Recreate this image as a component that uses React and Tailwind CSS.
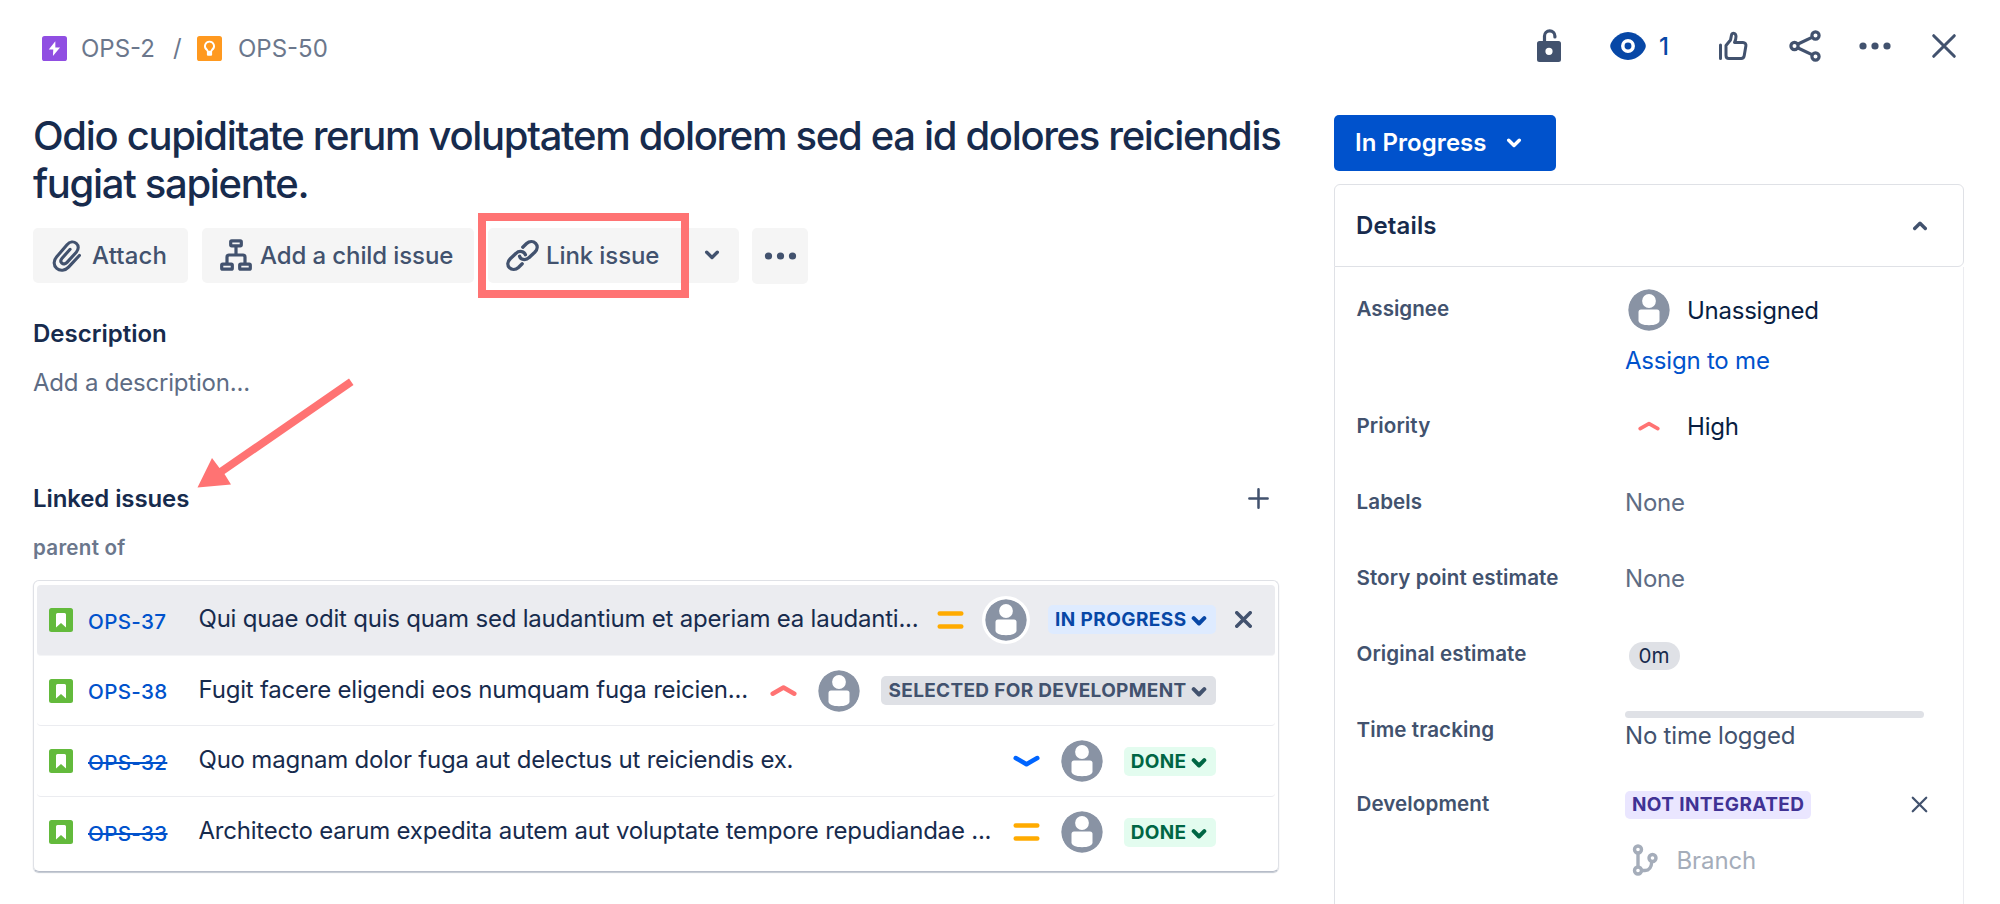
import React from 'react';

const linkedIssues = [
  { key: 'OPS-37', summary: 'Qui quae odit quis quam sed laudantium et aperiam ea laudanti...', priority: 'medium', status: 'IN PROGRESS', active: true, statusClass: 'bg-[#deebff] text-[#0747a6] tracking-[0.42px]' },
  { key: 'OPS-38', summary: 'Fugit facere eligendi eos numquam fuga reicien...', priority: 'high', status: 'SELECTED FOR DEVELOPMENT', statusClass: 'bg-[#dfe1e6] text-[#42526e] tracking-[0.33px]' },
  { key: 'OPS-32', summary: 'Quo magnam dolor fuga aut delectus ut reiciendis ex.', priority: 'low', status: 'DONE', done: true, statusClass: 'bg-[#e3fcef] text-[#006644] tracking-[0.33px]' },
  { key: 'OPS-33', summary: 'Architecto earum expedita autem aut voluptate tempore repudiandae ...', priority: 'medium', status: 'DONE', done: true, statusClass: 'bg-[#e3fcef] text-[#006644] tracking-[0.33px]' },
];

const Chevron = ({ up, className, strokeWidth = 3.4 }) => (
  <svg viewBox="0 0 16 10" className={className} fill="none" stroke="currentColor" strokeWidth={strokeWidth} strokeLinecap="round" strokeLinejoin="round">
    <path d={up ? 'M2.7 7.5 8 2.2l5.3 5.3' : 'M2.7 2.2 8 7.5l5.3-5.3'} />
  </svg>
);

const Cross = ({ className, strokeWidth = 2.8 }) => (
  <svg viewBox="0 0 24 24" className={className} fill="none" stroke="currentColor" strokeWidth={strokeWidth} strokeLinecap="round">
    <path d="M2.5 2.5l19 19M21.5 2.5l-19 19" />
  </svg>
);

const Dots = ({ className }) => (
  <svg viewBox="0 0 32 8" className={className} fill="currentColor">
    <circle cx="4" cy="4" r="3.6" />
    <circle cx="16" cy="4" r="3.6" />
    <circle cx="28" cy="4" r="3.6" />
  </svg>
);

const Avatar = ({ ring }) => (
  <svg viewBox="0 0 42 42" className={`w-[42px] h-[42px] shrink-0 rounded-full ${ring ? 'ring-3 ring-white bg-white' : ''}`}>
    <circle cx="21" cy="21" r="20.7" fill="#8993a4" />
    <circle cx="21" cy="12" r="6.9" fill="#fff" />
    <path d="M13 20.5h16a2.5 2.5 0 0 1 2.5 2.5v8.5c0 3-4.5 4.7-10.5 4.7s-10.5-1.7-10.5-4.7V23a2.5 2.5 0 0 1 2.5-2.5z" fill="#fff" />
  </svg>
);

const Priority = ({ level, className = 'w-[27px] h-[20px]' }) => {
  if (level === 'medium') {
    return (
      <svg viewBox="0 0 27 20" className={className} stroke="#ffab00" strokeWidth="4.5" strokeLinecap="round">
        <path d="M2.7 3.5h21.6M2.7 16.5h21.6" />
      </svg>
    );
  }
  return (
    <svg viewBox="0 0 27 20" className={className} fill="none" stroke={level === 'high' ? '#ff7373' : '#0065ff'} strokeWidth="4.5" strokeLinecap="round" strokeLinejoin="round">
      <path d={level === 'high' ? 'M2.7 12.7 13.5 6.5l10.8 6.2' : 'M2.7 7 13.5 13.2 24.3 7'} />
    </svg>
  );
};

const StoryIcon = () => (
  <svg viewBox="0 0 24 24" className="w-[24px] h-[24px] shrink-0">
    <rect width="24" height="24" rx="2.5" fill="#63ba3c" />
    <path d="M7 6.5Q7 5 8.5 5h7Q17 5 17 6.5v13L12 15l-5 4.5z" fill="#fff" />
  </svg>
);

const Field = ({ label, children, className = 'h-[76px]' }) => (
  <div className={`flex items-center ${className}`}>
    <div className="w-[268.5px] shrink-0 text-[20.6px] font-semibold text-[#42526e] tracking-[0.08px]">{label}</div>
    {children}
  </div>
);

const App = () => {
  return (
    <div className="relative w-[2000px] h-[904px] overflow-hidden bg-white font-['Inter',sans-serif] text-[24px] leading-none text-[#172b4d] whitespace-nowrap">
      <header className="flex h-[112px] items-start justify-between">
        <div className="flex items-center pl-[42px] mt-[34px] h-[28px] text-[#6b778c]">
          <svg viewBox="0 0 24 24" className="w-[25px] h-[25px]">
            <rect width="24" height="24" rx="2.5" fill="#904ee2" />
            <path d="M12.8 5 6.5 13h4.3l-.3 6.3L17.3 11h-4.5z" fill="#fff" />
          </svg>
          <span className="ml-[14px] mt-px w-[75px]">OPS-2</span>
          <span className="ml-[17px] w-[9px]">/</span>
          <svg viewBox="0 0 24 24" className="w-[25px] h-[25px] ml-[15px]">
            <rect width="24" height="24" rx="2.5" fill="#ff991f" />
            <path d="M12 5.4a4.3 4.3 0 0 0-2.4 7.9l.9 1.7h3l.9-1.7A4.3 4.3 0 0 0 12 5.4z" fill="none" stroke="#fff" strokeWidth="1.8" />
            <rect x="9.5" y="14.3" width="5" height="4.7" rx="1" fill="#fff" />
          </svg>
          <span className="ml-[16px] mt-px">OPS-50</span>
        </div>

        <div className="flex items-center pr-[43px] mt-[28px] h-[36px] text-[#42526e]">
          <svg viewBox="0 0 26 36" className="w-[26px] h-[36px]">
            <path d="M8.5 15V8a5.2 5.2 0 0 1 10.4 0v1" fill="none" stroke="currentColor" strokeWidth="3.2" strokeLinecap="round" />
            <path fillRule="evenodd" d="M3.5 13h19a2.5 2.5 0 0 1 2.5 2.5v16a2.5 2.5 0 0 1-2.5 2.5h-19a2.5 2.5 0 0 1-2.5-2.5v-16a2.5 2.5 0 0 1 2.5-2.5zM13 19.7a3.6 3.6 0 1 0 0 7.2 3.6 3.6 0 0 0 0-7.2z" fill="currentColor" />
          </svg>
          <svg viewBox="0 0 36 28" className="w-[36px] h-[28px] ml-[48px]">
            <path d="M18 0C8 0 .2 9.5.2 14S8 28 18 28s17.8-9.5 17.8-14S28 0 18 0z" fill="#0747a6" />
            <circle cx="18" cy="14" r="5.2" fill="none" stroke="#fff" strokeWidth="3.5" />
          </svg>
          <span className="w-[14px] ml-[13px] mt-px text-[#0747a6] font-medium">1</span>
          <svg viewBox="0 0 30 30" className="w-[30px] h-[30px] ml-[45px]" fill="none" stroke="currentColor" strokeWidth="3" strokeLinecap="round" strokeLinejoin="round">
            <path d="M2.5 14v13.5M8 14.5 12.5 9l1-5c.5-2.8 4.5-2 4.5 1.500 0 2.500-.5 4-1.500 6H25c2 0 3.200 1.600 2.900 3.300l-1.700 10c-.3 1.800-1.500 2.700-3 2.700H11c-2 0-3-1-3-3z" />
          </svg>
          <svg viewBox="0 0 32 32" className="w-[32px] h-[32px] ml-[41px]" fill="none" stroke="currentColor" strokeWidth="3.2">
            <circle cx="5.5" cy="16" r="3.6" />
            <circle cx="26.5" cy="5.5" r="3.6" />
            <circle cx="26.5" cy="26.5" r="3.6" />
            <path d="m8.5 14.3 15-7.2M8.5 17.7l15 7.2" />
          </svg>
          <Dots className="w-[32px] h-[8px] ml-[38px]" />
          <Cross className="w-[26px] h-[26px] ml-[40px]" />
        </div>
      </header>

      <div className="flex h-[792px]">
        <main className="w-[1334px] shrink-0 pl-[33px]">
          <h1 className="text-[40px] leading-[48px] font-medium tracking-[-1.33px]">
            Odio cupiditate rerum voluptatem dolorem sed ea id dolores reiciendis
            <br />
            fugiat sapiente.
          </h1>

          <div className="flex mt-[19.5px] h-[56px] font-medium text-[#42526e]">
            <button className="flex items-center w-[155px] h-[55px] pl-[18px] rounded-[5px] bg-[#f5f5f5]">
              <svg viewBox="0 0 30 32" className="w-[31px] h-[33px]" fill="none" stroke="currentColor" strokeWidth="3" strokeLinecap="round" strokeLinejoin="round">
                <path d="M27.5 16 17 27.3c-3.3 3.5-8.3 4-11.5 1.2s-3.3-7.5-.2-11L15.5 5.5c2.7-3 6.5-3.4 9-1.2s2.5 5.7 0 8.5l-9 9.9c-1.5 1.7-3.7 1.9-5 .7s-1.2-3.2.2-4.8L18.5 10" />
              </svg>
              <span className="ml-[10px] mt-px tracking-[0.15px]">Attach</span>
            </button>
            <button className="flex items-center w-[272px] h-[55px] ml-[14px] pl-[18px] rounded-[5px] bg-[#f5f5f5]">
              <svg viewBox="0 0 32 32" className="w-[32px] h-[32px]" fill="none" stroke="currentColor" strokeWidth="3.2" strokeLinejoin="round">
                <rect x="10.7" y="1.8" width="10.6" height="5" rx="1" />
                <rect x="1.7" y="25.2" width="10.6" height="5" rx="1" />
                <rect x="19.7" y="25.2" width="10.6" height="5" rx="1" />
                <path d="M16 7v9M7 25v-7q0-2 2-2h14q2 0 2 2v7" />
              </svg>
              <span className="ml-[8px] mt-px tracking-[-0.1px]">Add a child issue</span>
            </button>
            <button className="flex items-center w-[200px] h-[55px] ml-[14px] pl-[17px] rounded-l-[5px] bg-[#f5f5f5]">
              <svg viewBox="0 0 24 24" className="w-[35px] h-[35px]" fill="none" stroke="currentColor" strokeWidth="2.3" strokeLinecap="round" strokeLinejoin="round">
                <path d="M10 12.5c.4 1.3 1.3 2 2.5 2.2 1.6.3 2.8-.1 3.9-1.2l4-3.7c2-2 2.1-4.5.6-6.1-1.6-1.6-4.3-1.6-6.2.1l-2.6 2.5" />
                <path d="M14 11.5c-.4-1.3-1.3-2-2.5-2.2-1.6-.3-2.8.1-3.9 1.2l-4 3.7c-2 2-2.1 4.5-.6 6.1 1.6 1.6 4.3 1.6 6.2-.1l2.6-2.5" />
              </svg>
              <span className="ml-[6px] mt-px tracking-[-0.1px]">Link issue</span>
            </button>
            <button className="flex items-center justify-center w-[51px] h-[55px] pr-[4px] rounded-r-[5px] bg-[#f5f5f5]">
              <Chevron className="w-[16px] h-[10px]" />
            </button>
            <button className="flex items-center justify-center w-[56px] h-[56px] ml-[13px] rounded-[5px] bg-[#f5f5f5]">
              <Dots className="w-[33px] h-[8px]" />
            </button>
          </div>

          <h2 className="mt-[38.5px] h-[24px] font-semibold">Description</h2>
          <p className="mt-[25px] h-[24px] text-[#5e6c84] tracking-[-0.2px]">Add a description...</p>

          <div className="flex items-center justify-between mt-[90px] h-[26px] pr-[65px]">
            <h2 className="mt-[2px] font-semibold tracking-[-0.1px]">Linked issues</h2>
            <svg viewBox="0 0 20 20" className="w-[21px] h-[21px] text-[#42526e]" stroke="currentColor" strokeWidth="2.4" strokeLinecap="round">
              <path d="M10 1.3v17.4M1.3 10h17.4" />
            </svg>
          </div>
          <h3 className="mt-[27px] h-[21px] text-[20.6px] font-semibold text-[#6b778c] tracking-[0.25px]">parent of</h3>

          <div className="mt-[21px] w-[1246px] h-[292px] pt-[4px] px-[3px] rounded-[6px] border border-[#dfe1e6] border-b-[#b6bcc8] shadow-[0_1px_1px_rgba(9,30,66,0.25)]">
            {linkedIssues.map((issue) => (
              <div
                key={issue.key}
                className={`flex items-center h-[70.7px] pl-[12px] pr-[59px] rounded-[4px] border-b last:border-b-0 ${
                  issue.active ? 'bg-[#ebecf0] border-[#f4f5f7]' : 'bg-white border-[#ebecf0]'
                }`}
              >
                <StoryIcon />
                <span className={`ml-[15px] mt-[4px] w-[110.5px] text-[20.6px] font-medium text-[#0052cc] tracking-[0.35px] ${issue.done ? 'line-through' : ''}`}>{issue.key}</span>
                <span className="flex-1 mt-[-2px] text-[#172b4d] tracking-[-0.21px]">{issue.summary}</span>
                <Priority level={issue.priority} />
                <span className="flex mx-[21px]"><Avatar ring={issue.active} /></span>
                <span className={`flex items-center h-[29px] pl-[7px] pr-[9px] rounded-[5px] text-[19px] font-bold ${issue.statusClass}`}>
                  {issue.status}
                  <Chevron className="w-[16px] h-[10px] ml-[4.5px] mt-[3px]" strokeWidth={4} />
                </span>
                {issue.active && <Cross className="w-[17px] h-[17px] ml-[19px] -mr-[36px] text-[#42526e]" strokeWidth={5} />}
              </div>
            ))}
          </div>
        </main>

        <aside className="w-[630px] shrink-0 pt-[3px]">
          <button className="flex items-center w-[222px] h-[56px] pl-[21px] rounded-[5px] bg-[#0052cc] font-semibold text-white">
            <span className="w-[133px] text-left tracking-[0.05px]">In Progress</span>
            <Chevron className="w-[16px] h-[10px] ml-[18px]" />
          </button>

          <div className="flex items-center justify-between mt-[13px] h-[83px] pl-[21px] pr-[35px] rounded-[6px] rounded-bl-none border border-[#dfe1e6]">
            <h2 className="font-semibold tracking-[0.15px]">Details</h2>
            <Chevron up className="w-[16px] h-[10px] text-[#42526e]" />
          </div>

          <div className="h-[637px] pl-[21.5px] border-x border-[#ebecf0] border-l-[#dfe1e6]">
            <div className="flex h-[121px]">
              <div className="w-[268.5px] pt-[32px] text-[20.6px] font-semibold text-[#42526e]">Assignee</div>
              <div className="pt-[22px]">
                <div className="flex items-center h-[42px] pl-[3px] text-[#091e42]">
                  <Avatar />
                  <span className="ml-[17px] mt-px tracking-[-0.25px]">Unassigned</span>
                </div>
                <a href="#" className="block mt-[18px] text-[#0052cc] tracking-[-0.2px]">Assign to me</a>
              </div>
            </div>
            <Field label="Priority">
              <div className="flex items-center pl-[13px] text-[#091e42]">
                <Priority level="high" className="w-[22px] h-[17px]" />
                <span className="ml-[27px] mt-px tracking-[-0.2px]">High</span>
              </div>
            </Field>
            <Field label="Labels"><span className="mt-px text-[#5e6c84] tracking-[-0.2px]">None</span></Field>
            <Field label="Story point estimate"><span className="mt-px text-[#5e6c84] tracking-[-0.2px]">None</span></Field>
            <Field label="Original estimate">
              <span className="flex items-center justify-center w-[51px] h-[28px] ml-[3.5px] mt-[4px] rounded-full bg-[#dfe1e6] text-[20.6px]">0m</span>
            </Field>
            <Field label="Time tracking">
              <div className="w-[299px] -mt-[2px] text-[#42526e]">
                <div className="h-[7px] rounded-full bg-[#dfe1e6]" />
                <div className="mt-[6px] tracking-[-0.2px]">No time logged</div>
              </div>
            </Field>
            <Field label="Development" className="h-[73px]">
              <span className="flex items-center h-[28px] px-[7px] rounded-[5px] bg-[#eae6ff] text-[19px] font-bold text-[#403294] tracking-[0.38px]">NOT INTEGRATED</span>
              <Cross className="w-[17px] h-[17px] ml-auto mr-[35px] text-[#42526e]" strokeWidth={3.2} />
            </Field>
            <div className="flex items-center h-[38px] pl-[275px] text-[#a5adba]">
              <svg viewBox="0 0 26 32" className="w-[26px] h-[32px]" fill="none" stroke="currentColor" strokeWidth="3.4">
                <circle cx="6" cy="5.5" r="3.5" />
                <circle cx="6" cy="26.5" r="3.5" />
                <circle cx="20.5" cy="14" r="3.5" />
                <path d="M6 9v14M9.5 26.5H13c5 0 6.5-3.5 6.8-9" />
              </svg>
              <span className="ml-[19px] mt-px tracking-[-0.1px]">Branch</span>
            </div>
          </div>
        </aside>
      </div>

      {/* callouts */}
      <div className="absolute left-[478px] top-[213px] w-[211px] h-[85px] border-8 border-[#ff7373]" />
      <svg viewBox="0 0 160 112" className="absolute left-[196px] top-[377px] w-[160px] h-[112px]" fill="#ff7373">
        <path d="M153 1.5 157.5 8l-129 89L35 107.5l-33.500 3L16 81l7.500 10z" />
      </svg>
    </div>
  );
};

export default App;
